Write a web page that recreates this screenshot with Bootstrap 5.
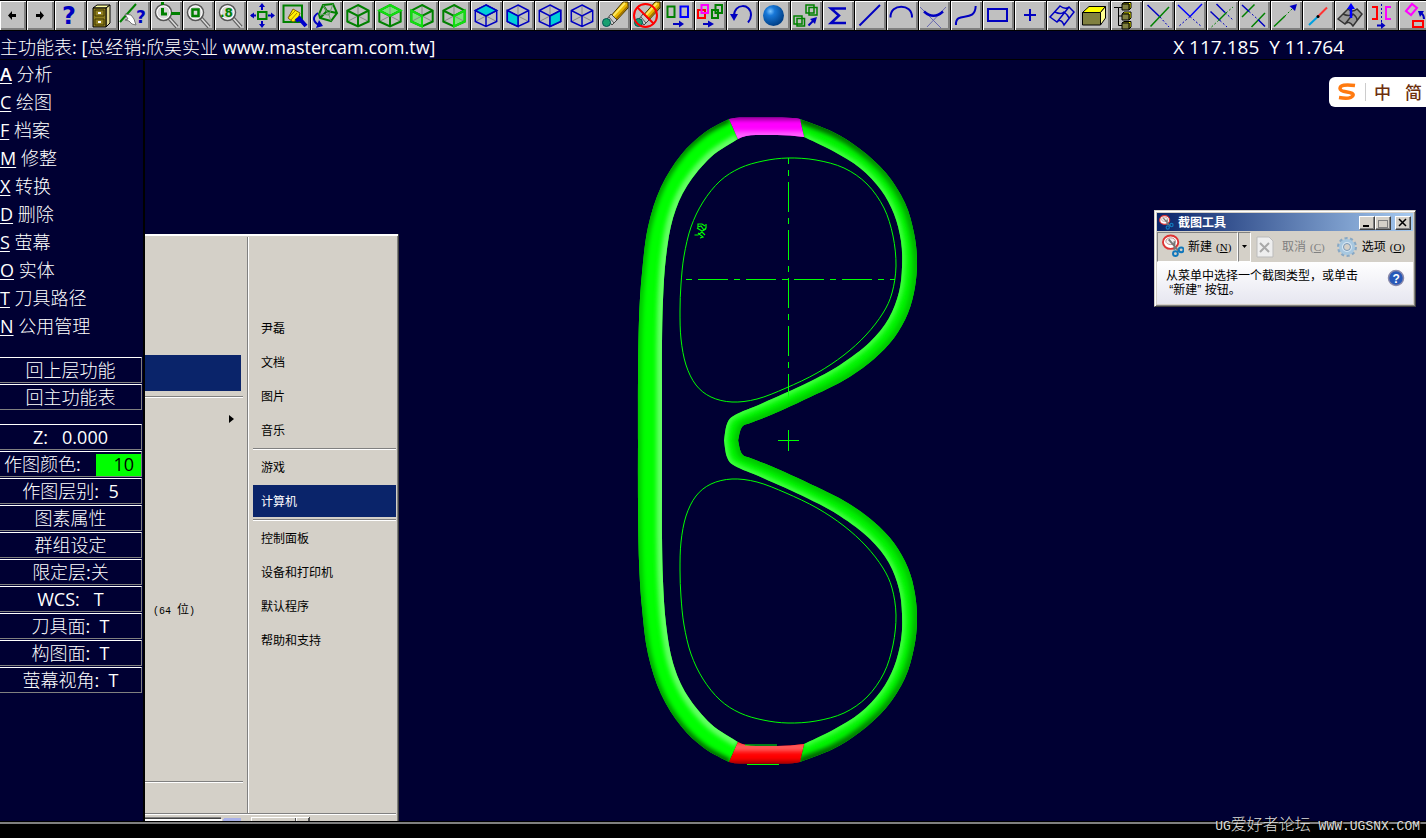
<!DOCTYPE html>
<html lang="zh-CN">
<head>
<meta charset="utf-8">
<meta name="viewport" content="width=device-width, initial-scale=1">
<title>Mastercam</title>
<link href="https://cdn.jsdelivr.net/npm/bootstrap@5.3.0/dist/css/bootstrap.min.css" rel="stylesheet">
<style>
:root{--navy:#000033;--face:#d4d0c8;--sel:#0a246a;--cad:"Open Sans","Noto Sans CJK SC Light","Noto Sans CJK SC DemiLight","Noto Sans CJK SC",sans-serif;--sys:"Liberation Sans","Noto Sans CJK SC",sans-serif}
body{background:var(--navy);color:#fff;font:18px/28px var(--cad);overflow:hidden}
button,a{font:inherit;color:inherit}
.toolbar{background:#000;padding:1px 0;gap:1px}
.tool{flex:none;width:31px;height:29px;padding:0;border:0;background:#c0c0c0;box-shadow:inset 1px 1px #fff,inset -2px -2px #808080}
.tool.narrow{width:27px}
.tool.first{width:26px}
.tool svg{display:block;width:31px;height:29px;fill:none;stroke:#0000c0;stroke-width:2}
.tool.narrow svg{width:27px}
.tool.first svg{width:26px}
.tool text{stroke:none;font-weight:700}
.g,.tool svg.g{stroke:#008000}.m{stroke:#f0f}.r{stroke:#f00}.thin,.tool svg.thin{stroke-width:1.5}.dash{stroke-dasharray:2 2;stroke-width:1}
.bf{fill:#0000c0;stroke:none}
.status-row{border-bottom:1px solid #000;padding:2px 82px 0 0;height:29px}
.coords{font-size:19px}
.side{width:145px;border-right:2px solid #000}
.side a{display:block;text-decoration:none;line-height:28px}
.side u{text-underline-offset:2px}
.cad-btn{display:block;width:142px;height:26px;margin-bottom:1px;padding:0;border:1px solid #808080;border-top-color:#fff;border-left:0;background:none;line-height:24px;text-align:center;white-space:pre}
.group-nav{padding-top:17px}
.group-state{padding-top:13px}
.swatch{background:#0f0;color:#000;width:45px;height:22px;line-height:20px;padding-right:7px;text-align:right}
.startmenu{left:145px;top:174px;bottom:1px;width:254px;background:var(--face);border-right:1px solid #404040;box-shadow:inset 0 2px #fff,inset -1px 0 #808080;color:#000;font:12px/36px var(--sys);padding-top:3px}
.groove{height:2px;border-top:1px solid #808080;border-bottom:1px solid #fff}
.left-col{width:103px;border-right:1px solid #808080;box-shadow:1px 0 #fff;padding-top:118px}
.menu-arrow{margin:17px 12px 0 0}
.right-col{padding:74px 2px 0 5px}
.right-col a{display:block;height:34px;padding-left:8px;text-decoration:none}
.right-col .groove{margin-top:1px}
.right-col a.on{background:var(--sel) content-box;color:#fff;margin:1px 0 0;padding:0;height:33px;line-height:34px;text-indent:8px;border-bottom:1px solid var(--face)}
.left-sel{height:36px;width:96px;background:var(--sel);margin-bottom:5px}
.half{font:10px "Liberation Mono",monospace}
.bottom-line{height:2px;background:#808080;box-shadow:0 -1px #000}
.ime{right:0;top:17px;width:97px;height:30px;background:#fff;border-radius:6px 0 0 6px;color:#6d2f0d;font:500 17px/30px "Noto Sans CJK SC",sans-serif}
.ime i{width:1px;height:18px;background:#ccc}
.snip{right:10px;top:150px;width:262px;background:var(--face);border:1px solid;border-color:var(--face) #404040 #404040 var(--face);box-shadow:inset 1px 1px #fff,inset -1px -1px #808080;padding:2px;color:#000;font:12px/14px var(--sys)}
.snip-title{height:18px;background:linear-gradient(90deg,#0a246a,#a6caf0);color:#fff;font-weight:700;padding:1px 2px 0 2px}
.winbtn{width:16px;height:14px;padding:0;border:1px solid;border-color:#fff #404040 #404040 #fff;background:var(--face);box-shadow:inset -1px -1px #808080;display:block}
.winbtn svg{display:block}
.snip-bar{height:31px}
.snip-bar button{border:0;background:none;padding:0;height:30px}
.snip-bar .hot{border:1px solid #808080;border-right-color:#fff;border-bottom-color:#fff}
.snip-bar small{font:11px "Liberation Serif",serif}
.snip-body{height:42px;background:linear-gradient(#fff,#e6e6f0);padding:7px 8px 0 9px}
.foot{height:14px;background:#000}
.mark-text{right:6px;bottom:1px;font:13px/20px "Liberation Mono","Noto Sans CJK SC Light","Noto Sans CJK SC",monospace;color:#ddd;text-shadow:1px 1px 1px #000;white-space:pre}
.mark-text span{font-size:16px}
</style>
</head>
<body class="d-flex flex-column vh-100">

<svg width="0" height="0" class="position-absolute" aria-hidden="true">
  <symbol id="cubeWire" viewBox="0 1 31 29">
    <path d="M15 5V16L4.300 21.500M15 16L25.700 21.500" stroke="#888" stroke-width="1"/>
    <path d="M15 5L25.700 10.500V21.500L15 26.500L4.300 21.500V10.500ZM4.300 10.500L15 16L25.700 10.500M15 16V26.500"/>
  </symbol>
  <symbol id="lens" viewBox="0 1 31 29">
    <path d="M18 18L26 27" stroke="#606060" stroke-width="4"/><path d="M18 18L26 27" stroke="#ddd" stroke-width="1.500"/>
    <circle cx="12.500" cy="12.500" r="8" fill="#d8d8d8" stroke="#555" stroke-width="1.500"/><circle cx="12.500" cy="12.500" r="6.500" stroke="#fff" stroke-width="1"/>
  </symbol>
  <symbol id="pencil" viewBox="0 1 31 29">
    <path d="M11 17L24 2H29V8L16 22Z" fill="#e8b800" stroke="#403000" stroke-width="1"/>
    <path d="M14 16L26 3" stroke="#ffe860" stroke-width="2"/><path d="M17 19L29 6" stroke="#a07000" stroke-width="1.500"/>
    <path d="M8 19L12 14L18 20L13 25Z" fill="#ccc" stroke="#444" stroke-width="1"/><path d="M10 17L15 23" stroke="#555" stroke-width="1"/>
    <circle cx="7.500" cy="22.500" r="4" fill="#18a070" stroke="#055" stroke-width="1"/>
  </symbol>
  <symbol id="scissors" viewBox="0 0 24 24">
    <ellipse cx="9" cy="8" rx="8" ry="7" fill="#fff" stroke="#d33" stroke-width="2"/><ellipse cx="9" cy="7" rx="5" ry="3.500" fill="#eee" stroke="#b88" stroke-width="1"/>
    <path d="M7 5L18 18M13 7L13 16" stroke="#777" stroke-width="2"/>
    <circle cx="14" cy="20" r="2.500" fill="none" stroke="#17b" stroke-width="2"/><circle cx="20" cy="16" r="2.500" fill="none" stroke="#17b" stroke-width="2"/>
  </symbol>
</svg>

<nav class="toolbar d-flex overflow-hidden" aria-label="工具列">
  <button class="tool first" aria-label="上一页"><svg viewBox="0 1 26 29"><path d="M8 15.500L12 11V14H16V17H12V20Z" fill="#000" stroke="none"/></svg></button>
  <button class="tool narrow" aria-label="下一页"><svg viewBox="0 1 27 29"><path d="M17 15.500L13 11V14H9V17H13V20Z" fill="#000" stroke="none"/></svg></button>
  <button class="tool" aria-label="说明"><svg viewBox="1 1 31 29"><text x="8" y="24" font-size="24" font-family="DejaVu Sans" fill="#0000c0">?</text></svg></button>
  <button class="tool" aria-label="档案"><svg viewBox="0 1 31 29"><path d="M6 8L10 5H23L19 8Z" fill="#ffffa0" stroke="#000" stroke-width="1"/><path d="M19 8L23 5V23L19 27Z" fill="#e0d890" stroke="#000" stroke-width="1"/><path d="M6 8H19V27H6Z" fill="#908020" stroke="#000" stroke-width="1"/><path d="M8 10H17V16H8ZM8 19H17V25H8Z" stroke="#403800" stroke-width="1"/><path d="M11 13H14M11 22H14" stroke="#fff"/></svg></button>
  <button class="tool" aria-label="分析"><svg viewBox="0 1 31 29"><path class="g" d="M1 22L17 4"/><path d="M6 14L12 15L15 19L17 25L13 24L10 21L6 20L9 19Z" fill="#fff" stroke="#777" stroke-width="1"/><text x="17" y="23" font-size="17" font-family="DejaVu Sans" fill="#0000c0">?</text></svg></button>
  <button class="tool" aria-label="视窗放大"><svg viewBox="0 1 31 29"><use href="#lens" width="31" height="29" y="1"/><path class="g" d="M11.500 2V5M11.500 8V14H16M20 13.500H29" stroke-width="3"/></svg></button>
  <button class="tool" aria-label="缩放"><svg viewBox="0 1 31 29"><use href="#lens" width="31" height="29" y="1"/><path class="g" d="M9.500 9.500H15.500V16H9.500Z" stroke-width="2.500"/></svg></button>
  <button class="tool" aria-label="缩小 0.8 倍"><svg viewBox="0 1 31 29"><use href="#lens" width="31" height="29" y="1"/><text x="5" y="17" font-size="12" font-family="DejaVu Sans" fill="#008000">.8</text></svg></button>
  <button class="tool" aria-label="适度化"><svg viewBox="0 1 31 29"><path class="g" d="M11 12H19.500V19H11Z"/><path d="M15 10V5M15 21V26M9 15.500H4M21 15.500H26"/><path class="bf" d="M15 3L18 7H12ZM15 28L18 24H12ZM3 15.500L7 12.500V18.500ZM28 15.500L24 12.500V18.500Z"/></svg></button>
  <button class="tool" aria-label="重画"><svg viewBox="0 1 31 29"><path class="g" d="M4.500 5.500H23V22H4.500Z"/><path d="M14 9L21 13L19 19L14 22L9 18Z" fill="#fe0" stroke="#806000" stroke-width="1"/><path d="M10 17L16 11M12 20L18 13" stroke="#a80" stroke-width="1"/><path d="M19 17L27 26M17 21L22 17" stroke="#00c" stroke-width="4"/></svg></button>
  <button class="tool" aria-label="动态旋转"><svg viewBox="0 1 31 29"><path class="g" d="M12 5L22 4L26 13L20 21L9 18L8 14ZM12 5L16 11L26 13M16 11L9 18"/><path d="M12 5L18 15L20 21M22 4L18 15L8 14" stroke="#699a69" stroke-width="1"/><path d="M7 13C1 17 2 22 8 25"/><path class="bf" d="M5 28L12 26L8 20Z"/></svg></button>
  <button class="tool" aria-label="等角视图"><svg class="g" viewBox="0 1 31 29"><use href="#cubeWire" width="31" height="29" y="1"/></svg></button>
  <button class="tool" aria-label="俯视图"><svg class="g" viewBox="0 1 31 29"><path d="M15 5L25.700 10.500L15 16L4.300 10.500Z" fill="#80e080" stroke="none"/><use href="#cubeWire" width="31" height="29" y="1"/><path d="M15 5L25.700 10.500L15 16L4.300 10.500Z" stroke="#10e010"/></svg></button>
  <button class="tool" aria-label="前视图"><svg class="g" viewBox="0 1 31 29"><path d="M4.300 10.500L15 16V26.500L4.300 21.500Z" fill="#80e080" stroke="none"/><use href="#cubeWire" width="31" height="29" y="1"/><path d="M4.300 10.500L15 16V26.500L4.300 21.500Z" stroke="#10e010"/></svg></button>
  <button class="tool" aria-label="侧视图"><svg class="g" viewBox="0 1 31 29"><path d="M25.700 10.500L15 16V26.500L25.700 21.500Z" fill="#80e080" stroke="none"/><use href="#cubeWire" width="31" height="29" y="1"/><path d="M25.700 10.500L15 16V26.500L25.700 21.500Z" stroke="#10e010"/></svg></button>
  <button class="tool" aria-label="俯视构图面"><svg class="thin" viewBox="0 1 31 29"><use href="#cubeWire" width="31" height="29" y="1"/><path d="M15 5L25.700 10.500L15 16L4.300 10.500Z" fill="#00d0d8"/></svg></button>
  <button class="tool" aria-label="前视构图面"><svg class="thin" viewBox="0 1 31 29"><use href="#cubeWire" width="31" height="29" y="1"/><path d="M4.300 10.500L15 16V26.500L4.300 21.500Z" fill="#00d0d8"/></svg></button>
  <button class="tool" aria-label="侧视构图面"><svg class="thin" viewBox="0 1 31 29"><use href="#cubeWire" width="31" height="29" y="1"/><path d="M25.700 10.500L15 16V26.500L25.700 21.500Z" fill="#00d0d8"/></svg></button>
  <button class="tool" aria-label="空间构图"><svg class="thin" viewBox="0 1 31 29"><use href="#cubeWire" width="31" height="29" y="1"/></svg></button>
  <button class="tool" aria-label="删除"><svg viewBox="0 1 31 29"><use href="#pencil" width="31" height="29" y="1"/></svg></button>
  <button class="tool" aria-label="恢复删除"><svg viewBox="0 1 31 29"><use href="#pencil" width="31" height="29" y="1"/><circle class="r" cx="14.500" cy="15.500" r="11.500"/><path class="r" d="M6 7L23 24"/></svg></button>
  <button class="tool" aria-label="转换"><svg viewBox="0 1 31 29"><path class="g" d="M4.500 6.500H11.500V17H4.500Z"/><path d="M17.500 6.500H25V17H17.500Z" stroke="#00f"/><path d="M10 24H17"/><path class="bf" d="M21 24L16 20.500V27.500Z"/></svg></button>
  <button class="tool" aria-label="复制"><svg viewBox="0 1 31 29"><path class="r" d="M3 10H10V18H3Z"/><path class="m" d="M6.500 5H13V13H6.500Z"/><path class="g" d="M17 10H23V18H17ZM20.500 5H27V13H20.500Z"/><path d="M8 24H14"/><path class="bf" d="M19 24L13 20.500V27.500Z"/></svg></button>
  <button class="tool" aria-label="回复"><svg viewBox="0 1 31 29"><path d="M7 16C7 3 24 3 24 15Q24 19 21 22.500"/><path class="bf" d="M7 21L3 14H11Z"/></svg></button>
  <button class="tool" aria-label="着色"><svg viewBox="0 1 31 29"><defs><radialGradient id="ball" cx=".35" cy=".3" r=".7"><stop offset="0" stop-color="#7cc4ff"/><stop offset=".3" stop-color="#1878d8"/><stop offset="1" stop-color="#004088"/></radialGradient></defs><circle cx="14.500" cy="15.500" r="10.500" fill="url(#ball)" stroke="none"/></svg></button>
  <button class="tool" aria-label="缩放图素"><svg viewBox="0 1 31 29"><path class="g" d="M15 5H23V13H15ZM18 7.500H26V15H18ZM3 16H11V24H3ZM6 18.500H13.500V26H6Z" stroke-width="1.500"/><path d="M17.500 25.500L23 20"/><path class="bf" d="M26 17L24 24L19 19Z"/></svg></button>
  <button class="tool" aria-label="求和"><svg viewBox="0 1 31 29"><path d="M23 8.500H8L16 15.500L8 23H23" stroke-width="2.500"/></svg></button>
  <button class="tool" aria-label="直线"><svg viewBox="0 1 31 29"><path d="M4.500 25.500L25 5"/></svg></button>
  <button class="tool" aria-label="圆弧"><svg viewBox="0 1 31 29"><path d="M3.500 17.500C3 3 25.500 3 25 17.500"/></svg></button>
  <button class="tool" aria-label="倒圆角"><svg viewBox="0 1 31 29"><path d="M1 7L22 28M27 7L8 27" stroke="#6868b0" stroke-width="1"/><path d="M5 11.500Q14.500 20 24 11.500" stroke-width="2.500"/></svg></button>
  <button class="tool" aria-label="曲线"><svg viewBox="0 1 31 29"><path d="M5 25C4 10 24 24 24.700 6"/></svg></button>
  <button class="tool" aria-label="矩形"><svg viewBox="0 1 31 29"><path d="M5 9H24V21H5Z"/></svg></button>
  <button class="tool" aria-label="点"><svg viewBox="0 1 31 29"><path d="M15 9V21M9 15H21"/></svg></button>
  <button class="tool" aria-label="曲面"><svg class="thin" viewBox="0 1 31 29"><path d="M3 17L13 6Q18 10 22 7Q26 11 27 12L17 25Q14 18 10 22ZM8 12Q14 15 17 12Q21 15 22 18M10 22L18 12L22 7"/></svg></button>
  <button class="tool" aria-label="实体"><svg viewBox="0 1 31 29"><g stroke="#000" stroke-width="1"><path d="M3.500 12.500H21.500V25H3.500Z" fill="#808040"/><path d="M3.500 12.500L10 6.500H26.500L21.500 12.500Z" fill="#ff0"/><path d="M21.500 12.500L26.500 6.500V18L21.500 25Z" fill="#ffff90"/></g></svg></button>
  <button class="tool" aria-label="实体管理"><svg viewBox="0 1 31 29"><g stroke="#000" stroke-width="1"><path d="M3 7.500H7.500V25.500M7.500 7.500H11M7.500 16H11M7.500 25.500H11"/><path d="M11 4L13 2.500H20V8L18 10V4ZM11 14L13 12H20V18L18 20V14ZM11 23L13 21.500H20V27L18 29V23Z" fill="#ff0"/><path d="M11 4H18V10H11ZM11 14H18V20H11ZM11 23H18V29H11Z" fill="#808040"/></g></svg></button>
  <button class="tool" aria-label="修整一物体"><svg class="thin" viewBox="0 1 31 29"><path d="M4.500 5L17 17"/><path class="dash" d="M17 17L26 27"/><path class="g" d="M26 7L7.500 26.500"/></svg></button>
  <button class="tool" aria-label="修整二物体"><svg class="thin" viewBox="0 1 31 29"><path d="M3 5L15 16.500L27 4" stroke="#00f"/><path class="dash" d="M15 16.500L27 27M15 16.500L3 27"/></svg></button>
  <button class="tool" aria-label="修整三物体"><svg class="thin" viewBox="0 1 31 29"><path d="M3.500 11.500L13 20.500M9.500 4L18 12.500"/><path class="dash" d="M13 20.500L20 27M18 12.500L26 20"/><path class="g" d="M12 20L19 13"/><path class="g dash" d="M4.500 27L12 20M19 13L26 7"/></svg></button>
  <button class="tool" aria-label="分割"><svg class="thin" viewBox="0 1 31 29"><path class="g" d="M3 17L15.500 4.500M12.500 27L26 13"/><path d="M3 5L10 11.500M19 19.500L26 26.500"/><path class="dash" d="M10 11.500L19 19.500"/></svg></button>
  <button class="tool" aria-label="延伸"><svg class="thin" viewBox="0 1 31 29"><path class="g" d="M3 26.500L14 16"/><path class="g dash" d="M14 16L22 8"/><path class="bf" d="M26 4L24 11L18.500 6Z"/></svg></button>
  <button class="tool" aria-label="打断"><svg viewBox="0 1 31 29"><path d="M6 25L15 16.500" stroke="#00a0e0"/><path d="M15 16.500L24 7.500" stroke="#f33"/><circle cx="15" cy="16.500" r="1.500" fill="#000" stroke="none"/></svg></button>
  <button class="tool" aria-label="平移"><svg viewBox="0 1 31 29"><path d="M3 19L13 9Q17 13 22 9L27 14L18 26Q14 20 10 24ZM8 14Q14 17 18 14Q22 17 22 20M10 24L18 14" fill="#999" stroke="#333" stroke-width="1.500"/><path d="M16 18V8" stroke="#00f" stroke-width="2.500"/><path d="M16 3L20 9H12Z" fill="#00f" stroke="none"/></svg></button>
  <button class="tool" aria-label="镜射"><svg viewBox="0 1 31 29"><path class="r" d="M5 7H10V19H5"/><path class="m" d="M24 7H19V19H24"/><path class="dash" d="M14.500 4V23"/><path d="M10 25.500H15"/><path class="bf" d="M18.500 25.500L14 22V29Z"/></svg></button>
  <button class="tool" aria-label="旋转"><svg viewBox="0 1 31 29"><path class="m" d="M7 11L13 4L18 8L12 15Z"/><path class="r" d="M14 21H24V27H14Z"/><path d="M25 19Q25 15 22 13"/><path class="bf" d="M19 11L25 11L21 17Z"/></svg></button>
</nav>

<header class="status-row d-flex justify-content-between">
  <div class="text-nowrap">主功能表: [总经销:欣昊实业 www.mastercam.com.tw]</div>
  <div class="coords text-nowrap">X 117.185&nbsp; Y 11.764</div>
</header>

<main class="flex-grow-1 d-flex position-relative overflow-hidden">
  <aside class="side flex-shrink-0">
    <nav aria-label="主功能表">
      <a href="#"><u class="fw-semibold">A</u> 分析</a>
      <a href="#"><u>C</u> 绘图</a>
      <a href="#"><u>F</u> 档案</a>
      <a href="#"><u>M</u> 修整</a>
      <a href="#"><u>X</u> 转换</a>
      <a href="#"><u>D</u> 删除</a>
      <a href="#"><u>S</u> 萤幕</a>
      <a href="#"><u>O</u> 实体</a>
      <a href="#"><u>T</u> 刀具路径</a>
      <a href="#"><u>N</u> 公用管理</a>
    </nav>
    <div class="group-nav">
      <button class="cad-btn">回上层功能</button>
      <button class="cad-btn">回主功能表</button>
    </div>
    <div class="group-state">
      <button class="cad-btn">Z:&nbsp;&nbsp; 0.000</button>
      <button class="cad-btn d-flex justify-content-between align-items-end ps-1"><span>作图颜色:</span><span class="swatch">10</span></button>
      <button class="cad-btn">作图层别:&nbsp; 5</button>
      <button class="cad-btn">图素属性</button>
      <button class="cad-btn">群组设定</button>
      <button class="cad-btn">限定层:关</button>
      <button class="cad-btn">WCS:&nbsp;&nbsp; T</button>
      <button class="cad-btn">刀具面:&nbsp; T</button>
      <button class="cad-btn">构图面:&nbsp; T</button>
      <button class="cad-btn">萤幕视角:&nbsp; T</button>
    </div>
  </aside>

  <svg id="model" class="flex-grow-1 h-100" viewBox="145 60 1281 762" fill="none" aria-label="镜框模型">
    <defs>
      <clipPath id="clipL"><path id="tubeL"/></clipPath>
      <clipPath id="clipR"><path id="tubeR"/></clipPath>
      <clipPath id="clipB"><path d="M729 119Q736 117 742 117.500H782Q794 117.500 800 119L804 137Q790 135 777 135H756Q745 135 738 139Z"/></clipPath>
      <filter id="soft" filterUnits="userSpaceOnUse" x="620" y="90" width="310" height="400"><feGaussianBlur stdDeviation="2"/></filter>
      <linearGradient id="topDark" x1="0" y1="117" x2="0" y2="300" gradientUnits="userSpaceOnUse"><stop offset="0" stop-color="#006000"/><stop offset=".3" stop-color="#009800"/><stop offset="1" stop-color="#00c800"/></linearGradient>
    </defs>
    <g id="upper">
      <g clip-path="url(#clipL)"><rect x="630" y="100" width="120" height="342" fill="#0f0"/><path id="darkL" stroke="url(#topDark)" stroke-width="7" filter="url(#soft)"/><path id="lightL" stroke="#64ff64" stroke-width="11" filter="url(#soft)"/></g>
      <g clip-path="url(#clipR)"><rect x="715" y="100" width="210" height="342" fill="#00f400"/><path id="darkR" stroke="url(#topDark)" stroke-width="9" filter="url(#soft)"/><path id="lightR" stroke="#40ff40" stroke-width="7" filter="url(#soft)"/></g>
      <path class="lensLine" stroke="#0f0"/>
    </g>
    <use href="#upper" transform="matrix(1 0 0 -1 0 881)"/>
    <g clip-path="url(#clipB)"><path d="M725 110H810V145H725Z" fill="#f0f"/><path d="M725 117H810" stroke="#900090" stroke-width="6" filter="url(#soft)"/><path d="M725 136H810" stroke="#ff60ff" stroke-width="9" filter="url(#soft)"/></g>
    <g transform="matrix(1 0 0 -1 0 881)"><g clip-path="url(#clipB)"><path d="M725 110H810V145H725Z" fill="#f00"/><path d="M725 117H810" stroke="#900" stroke-width="6" filter="url(#soft)"/><path d="M725 134H810" stroke="#ff5858" stroke-width="9" filter="url(#soft)"/></g></g>
    <path d="M747 764.500H779M745 745H777" stroke="#0f0"/>
    <g stroke="#0f0" shape-rendering="crispEdges">
      <path d="M788.500 158V398" stroke-dasharray="30 6 6 6" stroke-dashoffset="24"/>
      <path d="M686 279.500H895" stroke-dasharray="30 6 6 6" stroke-dashoffset="36"/>
      <path d="M788.500 430V451M778 440.500H799"/>
    </g>
    <path d="M706 224V228L704 230L701 226L698 227V224H702L705 226M697 228L702 231L706 229M694.500 235H698L702 232L705 235M698 233L703 237L700 238" stroke="#0f0" stroke-width="1.200"/>
  </svg>

  <section class="startmenu position-absolute d-flex flex-column" aria-label="开始菜单">
    <div class="d-flex flex-grow-1">
      <div class="left-col d-flex flex-column">
        <div class="left-sel"></div>
        <div class="groove me-1"></div>
        <svg width="6" height="8" viewBox="0 0 6 8" class="menu-arrow align-self-end flex-shrink-0"><path d="M0 0L5 4L0 8Z"/></svg>
        <div class="ps-2 pt-3 my-auto"><span class="half">(64 </span>位<span class="half">)</span></div>
        <div class="groove me-1 flex-shrink-0" style="margin-bottom:30px"></div>
      </div>
      <div class="right-col flex-grow-1">
        <a href="#">尹磊</a>
        <a href="#">文档</a>
        <a href="#">图片</a>
        <a href="#">音乐</a>
        <div class="groove"></div>
        <a href="#">游戏</a>
        <a href="#" class="on">计算机</a>
        <div class="groove"></div>
        <a href="#">控制面板</a>
        <a href="#">设备和打印机</a>
        <a href="#">默认程序</a>
        <a href="#">帮助和支持</a>
      </div>
    </div>
    <div class="groove" style="margin-right:2px"></div>
    <svg width="252" height="6" viewBox="0 0 252 6" class="d-block" shape-rendering="crispEdges"><path d="M0 3H76V4H0Z" fill="#404040"/><path d="M0 4H77V6H0Z" fill="#fff"/><path d="M0 2H76V3H0Z" fill="#808080"/><path d="M79 3H96V6H78V4H79Z" fill="#a8b0e8"/><path d="M106 2H164V3H107V6H106ZM151 3H152V6H151Z" fill="#fff"/><path d="M150 3H151V6H150ZM164 2H165V6H163V3H164Z" fill="#505050"/></svg>
  </section>

  <div class="ime position-absolute d-flex align-items-center">
    <svg width="20" height="20" viewBox="0 0 20 20" class="ms-2" fill="none" stroke="#ff7a10" stroke-width="3.500"><path d="M18 3.500Q3 1.500 3 6.500Q3 9 10 10Q17 11 16 13.500Q14 17.500 2 15.500"/></svg>
    <i class="mx-2"></i><span>中</span><span class="ms-auto me-1">简</span>
  </div>

  <section class="snip position-absolute" aria-label="截图工具">
    <div class="snip-title d-flex align-items-center">
      <svg width="15" height="15"><use href="#scissors" width="15" height="15"/></svg><span class="ps-1">截图工具</span>
      <button class="winbtn ms-auto" aria-label="最小化"><svg width="13" height="12"><path d="M3 9H9" stroke="#000" stroke-width="2"/></svg></button>
      <button class="winbtn" aria-label="最大化"><svg width="13" height="12" fill="none" shape-rendering="crispEdges"><path d="M2.500 3H11.500V10.500H2.500Z" stroke="#808080"/></svg></button>
      <button class="winbtn ms-1" aria-label="关闭"><svg width="13" height="12"><path d="M3 2L10 9M10 2L3 9" stroke="#000" stroke-width="1.500"/></svg></button>
    </div>
    <div class="snip-bar d-flex align-items-center">
      <button class="hot d-flex align-items-center" style="width:81px"><svg width="26" height="26" class="ps-1"><use href="#scissors" width="23" height="24"/></svg><span class="ps-1">新建</span><small class="ps-1">(<u>N</u>)</small></button>
      <button class="hot" style="width:13px" aria-label="新建类型"><svg width="7" height="5" class="d-block mx-auto"><path d="M1 1H6L3.500 4Z"/></svg></button>
      <button class="d-flex align-items-center" style="color:#808080;margin-left:5px"><svg width="18" height="22" viewBox="0 0 18 22"><path d="M1 1H13L17 5V21H1Z" fill="#eee" stroke="#bbb"/><path d="M4 7L13 16M13 7L4 16" stroke="#a8a8a8" stroke-width="2"/></svg><span class="ps-2">取消</span><small class="ps-1">(<u>C</u>)</small></button>
      <button class="d-flex align-items-center ms-auto me-2"><svg width="22" height="24" viewBox="0 0 22 24" fill="none"><circle cx="11" cy="12" r="8.500" stroke="#88a8c4" stroke-width="3" stroke-dasharray="3 2.340"/><circle cx="11" cy="12" r="6.500" fill="#d8e8f4" stroke="#a8c8e0" stroke-width="3"/><circle cx="11" cy="12" r="3.500" fill="#d4d0c8" stroke="#7898b8"/></svg><span class="ps-1">选项</span><small class="ps-1">(<u>O</u>)</small></button>
    </div>
    <div class="snip-body d-flex justify-content-between align-items-start">
      <div class="text-nowrap">从菜单中选择一个截图类型，或单击<br>&nbsp;“新建” 按钮。</div>
      <svg width="18" height="18" viewBox="0 0 18 18"><circle cx="9" cy="9" r="7.500" fill="#2858b8" stroke="#88a" stroke-width="1.500"/><text x="5.500" y="13.500" font-size="12" font-weight="700" font-family="Liberation Sans" fill="#fff">?</text></svg>
    </div>
  </section>
</main>
<div class="bottom-line"></div>
<footer class="foot"></footer>
<div class="mark-text position-absolute">UG<span>爱好者论坛</span> WWW.UGSNX.COM</div>

<script>
// Smooth curves through the frame's measured points (Catmull-Rom to Bezier).
function spline(p, closed) {
  const n = p.length, at = i => closed ? p[(i + n) % n] : p[Math.max(0, Math.min(n - 1, i))];
  let d = '';
  for (let i = 0; i < (closed ? n : n - 1); i++) {
    const [a, b, c, e] = [at(i - 1), at(i), at(i + 1), at(i + 2)];
    d += `C${b[0] + (c[0] - a[0]) / 6} ${b[1] + (c[1] - a[1]) / 6} ${c[0] - (e[0] - b[0]) / 6} ${c[1] - (e[1] - b[1]) / 6} ${c[0]} ${c[1]}`;
  }
  return d;
}
const outerL = [[729,119],[704,133],[681,155],[661,187],[648,227],[642,273],[639,320],[638,380],[638,441]];
const innerL = [[738,139],[711,157],[687,186],[673,218],[666,257],[663,300],[662,345],[662,393],[662,441]];
const outerR = [[800,119],[833,132],[860,149],[886,173],[905,203],[914,233],[917,260],[915,287],[908,313],[894,338],[874,359],[851,376],[827,389],[780,411],[753,422],[742,427],[738,441]];
const innerR = [[804,137],[833,151],[860,168],[881,190],[894,214],[901,241],[902,267],[899,292],[889,318],[870,342],[840,365],[807,383],[763,403],[735,415],[727,424],[724,441]];
const lens = [[788,158],[763,161],[740,168],[720,181],[703,202],[691,227],[684,256],[681,284],[680,311],[681,339],[686,365],[696,385],[711,397],[732,402],[757,399],[786,388],[817,373],[844,355],[866,335],[883,313],[892,293],[896,266],[893,236],[884,208],[867,184],[844,168],[816,160]];
const start = p => `M${p[0][0]} ${p[0][1]}`;
const set = (id, d) => document.getElementById(id).setAttribute('d', d);
const tube = (a, b) => { const r = [...b].reverse(); return start(a) + spline(a) + `L${r[0]}` + spline(r) + 'Z'; };
set('tubeL', tube(outerL, innerL));
set('tubeR', tube(outerR, innerR));
for (const [id, p] of [['darkL', outerL], ['lightL', innerL], ['darkR', outerR], ['lightR', innerR]])
  set(id, start(p) + spline(p) + 'v20');
document.querySelector('.lensLine').setAttribute('d', start(lens) + spline(lens, true));
</script>
<script src="https://cdn.jsdelivr.net/npm/bootstrap@5.3.0/dist/js/bootstrap.bundle.min.js"></script>
</body>
</html>
